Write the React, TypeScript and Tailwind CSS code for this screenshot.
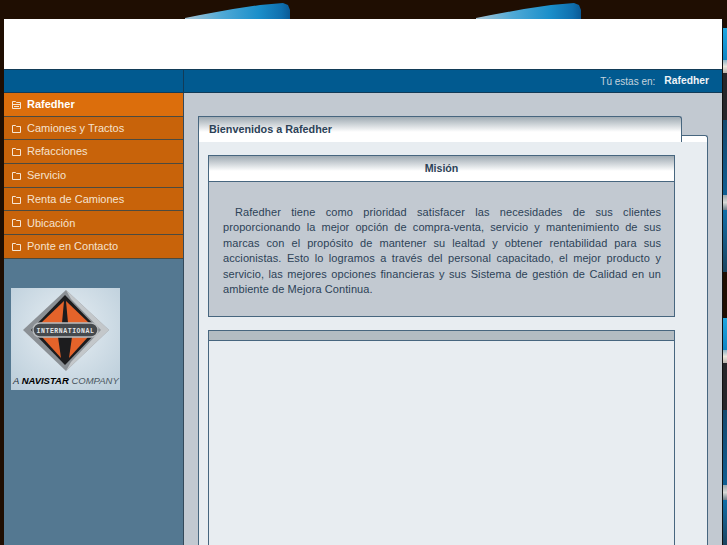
import React from 'react';

const menu = ['Rafedher', 'Camiones y Tractos', 'Refacciones', 'Servicio', 'Renta de Camiones', 'Ubicación', 'Ponte en Contacto'];

// background picture showing at the right edge, repeats every 290px
const strip = [
  'h-[9px] bg-[#1f0e02]',
  'h-[32px] bg-gradient-to-b from-[#1ea6e0] to-[#0f86c4]',
  'h-[13px] bg-gradient-to-b from-[#8fb4c6] via-[#ece6dc] to-[#b9b5ae]',
  'h-[47px] bg-[#26262a]',
  'h-[75px] bg-gradient-to-b from-[#15496e] to-[#0f5e92]',
  'h-[15px] bg-gradient-to-b from-[#9aa7ae] via-[#d9d9d6] to-[#6d7f8b]',
  'h-[62px] bg-gradient-to-b from-[#0f6ea8] to-[#1b4560]',
  'h-[46px] bg-[#1f0e02]',
  'h-[32px] bg-gradient-to-b from-[#1ea6e0] to-[#0f86c4]',
  'h-[13px] bg-gradient-to-b from-[#8fb4c6] via-[#ece6dc] to-[#b9b5ae]',
  'h-[47px] bg-[#26262a]',
  'h-[75px] bg-gradient-to-b from-[#15496e] to-[#0f5e92]',
  'h-[15px] bg-gradient-to-b from-[#9aa7ae] via-[#d9d9d6] to-[#6d7f8b]',
  'h-[45px] bg-gradient-to-b from-[#0f6ea8] to-[#1b4560]',
];

const Swoosh: React.FC<{ id: string }> = ({ id }) => (
  <svg width="105" height="19" viewBox="0 0 105 19" className="block">
    <defs>
      <linearGradient id={id} x1="0" x2="1" y1="0" y2="0">
        <stop offset="0" stopColor="#a9c6d6" />
        <stop offset="0.35" stopColor="#4fa9d6" />
        <stop offset="0.7" stopColor="#1b8fca" />
        <stop offset="0.92" stopColor="#0f6fae" />
        <stop offset="1" stopColor="#0a5a96" />
      </linearGradient>
    </defs>
    <path d="M0 18 L15 15 L48 9 L75 5 L98 3 L103 5 L105 10 L105 19 L0 19 Z" fill={`url(#${id})`} />
  </svg>
);

const Folder: React.FC<{ open?: boolean }> = ({ open }) => (
  <svg width="9" height="9" viewBox="0 0 9 9" className="block shrink-0" fill="none" stroke="#f7e6d4" strokeWidth="1">
    <path d="M.5 8.5V1.5H3.5L4.5 2.5H8.5V8.5Z" />
    {open && <path d="M.5 4.5H8.5M2 6.5H7" />}
  </svg>
);

const Logo = () => (
  <svg width="109" height="88" viewBox="0 0 109 88" className="block">
    <path d="M55 2 L98 42 L55 83 L12 42 Z" fill="#8b9095" />
    <path d="M55 2 L98 42 L55 83 L60 74 L90 42 L60 11 Z" fill="#c3c7ca" />
    <path d="M54 7 L88 42 L54 77 L20 42 Z" fill="#1c1c1e" />
    <path d="M53 13 L51 35 L30 35 Z" fill="#e4632a" />
    <path d="M55 13 L57 35 L78 35 Z" fill="#e4632a" />
    <path d="M47 49 L31 49 L50 70 Z" fill="#e4632a" />
    <path d="M61 49 L77 49 L58 70 Z" fill="#e4632a" />
    <rect x="22" y="35" width="65" height="14" rx="7" fill="#45494d" stroke="#b8bcbf" strokeWidth="1.5" />
    <text x="54.5" y="45" textAnchor="middle" fontSize="6.5" fontWeight="700" letterSpacing="0.55" fill="#e3e5e7" fontFamily="'Liberation Mono', monospace">INTERNATIONAL</text>
  </svg>
);

export default function App() {
  return (
    <div className="h-[545px] w-[727px] overflow-hidden bg-[#1f0e02] font-['Liberation_Sans',Arial,sans-serif] text-[11px]">
      {/* top strip */}
      <div className="flex h-[19px] pl-[185px]">
        <Swoosh id="sw1" />
        <div className="w-[186px]" />
        <Swoosh id="sw2" />
      </div>

      <div className="flex h-[526px]">
        <div className="w-[4px] shrink-0" />
        <div className="flex w-[718px] shrink-0 flex-col">
          <div className="h-[50px] shrink-0 bg-white" />
          <div className="flex h-[24px] shrink-0 border-y border-y-[#123b57] bg-[#015a90]">
            <div className="w-[180px] shrink-0 border-r border-r-[#123b57]" />
            <div className="flex flex-1 items-center justify-end pr-[13px] text-[10px] text-[#c5d3dd]">
              Tú estas en:
              <b className="ml-[9px] text-[10.3px] text-[#eef3f7]">Rafedher</b>
            </div>
          </div>

          <div className="flex min-h-0 flex-1">
            {/* left menu */}
            <div className="flex w-[180px] shrink-0 flex-col border-r border-r-[#34495a] bg-[#547891]">
              {menu.map((item, i) => (
                <div
                  key={item}
                  className={`flex h-[23.7px] shrink-0 items-center gap-[6px] border-b border-b-[#4b4a40] pl-[8px] ${
                    i === 0 ? 'bg-[#dc6e0c] font-bold text-white' : 'bg-[#c8630a] text-[#f5e2cf]'
                  }`}
                >
                  <Folder open={i === 0} />
                  {item}
                </div>
              ))}
              <div className="ml-[7px] mt-[29px] h-[102px] w-[109px] bg-[radial-gradient(circle_at_50%_40%,#e8eff4,#b9ccd9)]">
                <Logo />
                <div className="whitespace-nowrap pl-[2px] text-[9.5px] italic leading-[10px] text-[#1d2a35]">
                  A <b className="font-bold text-black">NAVISTAR</b> <span className="text-[#4a5660]">COMPANY</span>
                </div>
              </div>
            </div>

            {/* content */}
            <div className="min-w-0 flex-1 bg-[#c2c9d1] px-[14px] pt-[23px]">
              <div className="flex h-[26px] items-stretch">
                <div className="flex w-[484px] items-center rounded-tr-[3px] border-x border-t border-[#47667f] bg-gradient-to-b from-[#a0abb3] to-white to-[60%] pl-[10px] text-[10.8px] font-bold text-[#2c4257]">
                  Bienvenidos a Rafedher
                </div>
                <div className="mt-[19px] flex-1 rounded-tr-[3px] border-r border-t border-[#47667f] bg-white" />
              </div>
              <div className="h-[480px] border-x border-[#47667f] bg-[#e8edf1] pl-[9px] pt-[13px]">
                <div className="w-[467px]">
                  <div className="border border-[#47667f] bg-[#c2c9d1]">
                    <div className="flex h-[26px] items-center justify-center border-b border-b-[#47667f] bg-gradient-to-b from-[#a0abb3] to-white to-[60%] pb-[2px] text-[10.67px] font-bold text-[#2c4257]">
                      Misión
                    </div>
                    <p className="h-[134px] pl-[14px] pr-[13px] pt-[23px] text-justify indent-[12px] leading-[15.45px] tracking-[0.08px] text-[#2c4257]">
                      Rafedher tiene como prioridad satisfacer las necesidades de sus clientes proporcionando la mejor opción de compra-venta, servicio y mantenimiento de sus marcas con el propósito de mantener su lealtad y obtener rentabilidad para sus accionistas. Esto lo logramos a través del personal capacitado, el mejor producto y servicio, las mejores opciones financieras y sus Sistema de gestión de Calidad en un ambiente de Mejora Continua.
                    </p>
                  </div>
                  <div className="mt-[13px] h-[300px] border border-[#47667f]">
                    <div className="h-[10px] border-b border-b-[#47667f] bg-[#b3bcc2]" />
                  </div>
                </div>
              </div>
            </div>
          </div>
        </div>
        {/* right background strip */}
        <div className="h-full w-[5px] overflow-hidden border-l border-l-[#111]">
          {strip.map((cls, i) => (
            <div key={i} className={cls} />
          ))}
        </div>
      </div>
    </div>
  );
}
